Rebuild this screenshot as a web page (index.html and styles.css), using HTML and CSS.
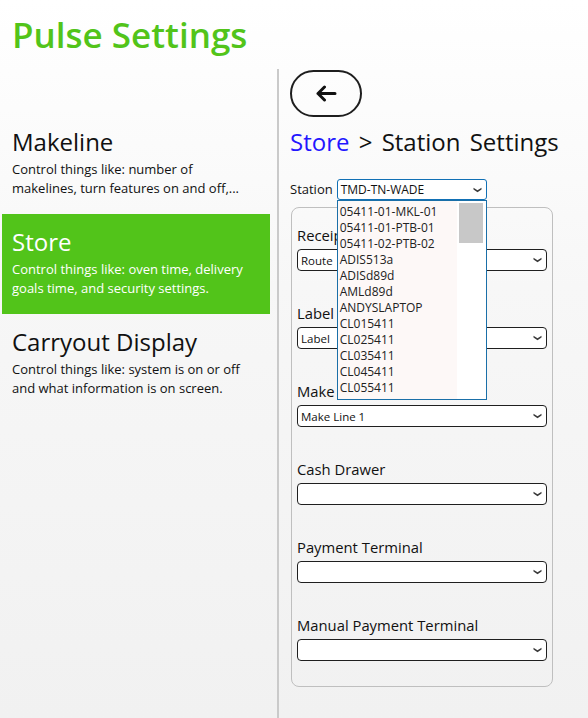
FILE: index.html
```html
<!DOCTYPE html>
<html lang="en">
<head>
<meta charset="utf-8">
<title>Pulse Settings</title>
<link rel="stylesheet" href="styles.css">
</head>
<body>
<header class="app-header">
  <h1 class="app-title">Pulse Settings</h1>
</header>
<div class="layout">
  <nav class="sidebar">
    <a class="nav-item" href="#">
      <h2 class="nav-title">Makeline</h2>
      <p class="nav-desc">Control things like: number of makelines, turn features on and off,...</p>
    </a>
    <a class="nav-item is-active" href="#">
      <h2 class="nav-title">Store</h2>
      <p class="nav-desc">Control things like: oven time, delivery goals time, and security settings.</p>
    </a>
    <a class="nav-item" href="#">
      <h2 class="nav-title">Carryout Display</h2>
      <p class="nav-desc">Control things like: system is on or off and what information is on screen.</p>
    </a>
  </nav>
  <main class="content">
    <button class="back-btn" type="button" aria-label="Back">
      <svg width="22" height="17" viewBox="0 0 22 17"><path d="M20 8.5H3M9.5 2L3 8.5 9.5 15" fill="none" stroke="#111" stroke-width="3" stroke-linecap="round" stroke-linejoin="round"/></svg>
    </button>
    <h2 class="breadcrumb"><a class="crumb-link" href="#">Store</a> &gt; Station Settings</h2>
    <div class="station-row">
      <span class="station-label">Station</span>
      <div class="station-picker">
        <div class="select select-open">
          <span class="select-value">TMD-TN-WADE</span>
          <svg class="chev" width="9" height="6" viewBox="0 0 9 6"><path d="M0.5 0.8L4.5 3.2 8.5 0.8V2.4L4.5 5.2 0.5 2.4Z" fill="#3a3a3a"/></svg>
        </div>
        <div class="dropdown">
          <ul class="dropdown-list">
            <li>05411-01-MKL-01</li>
            <li>05411-01-PTB-01</li>
            <li>05411-02-PTB-02</li>
            <li>ADIS513a</li>
            <li>ADISd89d</li>
            <li>AMLd89d</li>
            <li>ANDYSLAPTOP</li>
            <li>CL015411</li>
            <li>CL025411</li>
            <li>CL035411</li>
            <li>CL045411</li>
            <li>CL055411</li>
          </ul>
          <div class="scrollbar"><div class="scroll-thumb"></div></div>
        </div>
      </div>
    </div>
    <fieldset class="card">
      <div class="field">
        <label class="field-label">Receipt Printer</label>
        <div class="select"><span class="select-value">Route</span><svg class="chev" width="9" height="6" viewBox="0 0 9 6"><path d="M0.5 0.8L4.5 3.2 8.5 0.8V2.4L4.5 5.2 0.5 2.4Z" fill="#3a3a3a"/></svg></div>
      </div>
      <div class="field">
        <label class="field-label">Label Printer</label>
        <div class="select"><span class="select-value">Label</span><svg class="chev" width="9" height="6" viewBox="0 0 9 6"><path d="M0.5 0.8L4.5 3.2 8.5 0.8V2.4L4.5 5.2 0.5 2.4Z" fill="#3a3a3a"/></svg></div>
      </div>
      <div class="field">
        <label class="field-label">Make Line</label>
        <div class="select"><span class="select-value">Make Line 1</span><svg class="chev" width="9" height="6" viewBox="0 0 9 6"><path d="M0.5 0.8L4.5 3.2 8.5 0.8V2.4L4.5 5.2 0.5 2.4Z" fill="#3a3a3a"/></svg></div>
      </div>
      <div class="field">
        <label class="field-label">Cash Drawer</label>
        <div class="select"><span class="select-value"></span><svg class="chev" width="9" height="6" viewBox="0 0 9 6"><path d="M0.5 0.8L4.5 3.2 8.5 0.8V2.4L4.5 5.2 0.5 2.4Z" fill="#3a3a3a"/></svg></div>
      </div>
      <div class="field">
        <label class="field-label">Payment Terminal</label>
        <div class="select"><span class="select-value"></span><svg class="chev" width="9" height="6" viewBox="0 0 9 6"><path d="M0.5 0.8L4.5 3.2 8.5 0.8V2.4L4.5 5.2 0.5 2.4Z" fill="#3a3a3a"/></svg></div>
      </div>
      <div class="field">
        <label class="field-label">Manual Payment Terminal</label>
        <div class="select"><span class="select-value"></span><svg class="chev" width="9" height="6" viewBox="0 0 9 6"><path d="M0.5 0.8L4.5 3.2 8.5 0.8V2.4L4.5 5.2 0.5 2.4Z" fill="#3a3a3a"/></svg></div>
      </div>
    </fieldset>
  </main>
</div>
</body>
</html>
```
FILE: styles.css
```css
* { box-sizing: border-box; }
html, body { margin: 0; padding: 0; }
body {
  width: 588px;
  height: 718px;
  overflow: hidden;
  font-family: "Open Sans", "Noto Sans", sans-serif;
  color: #111;
  background: linear-gradient(to bottom, #ffffff 0%, #f7f7f7 40%, #f1f1f1 100%);
}
.app-header {
  height: 69px;
  padding: 13px 0 0 12px;
}
.app-title {
  margin: 0;
  font-size: 35px;
  line-height: 44px;
  font-weight: 600;
  color: #52c41a;
}
.layout {
  display: flex;
  height: 649px;
}
.sidebar {
  width: 279px;
  flex: none;
  border-right: 2px solid #cacaca;
  padding: 45px 0 0 2px;
  display: flex;
  flex-direction: column;
}
.nav-item {
  display: block;
  width: 268px;
  height: 100px;
  padding: 13px 10px 0 10px;
  text-decoration: none;
  color: #111;
}
.nav-item.is-active {
  background: #52c41a;
  color: #fff;
}
.nav-title {
  margin: 0;
  font-size: 24px;
  line-height: 30px;
  font-weight: 400;
}
.nav-desc {
  margin: 3px 0 0;
  font-size: 13px;
  line-height: 19px;
}
.content {
  flex: 1;
  padding: 1px 0 0 11px;
}
.back-btn {
  display: flex;
  align-items: center;
  justify-content: center;
  width: 72px;
  height: 47px;
  padding: 0;
  border: 2px solid #1e1e1e;
  border-radius: 24px;
  background: transparent;
}
.breadcrumb {
  margin: 10px 0 0;
  font-size: 24px;
  line-height: 30px;
  font-weight: 400;
  word-spacing: 3px;
  color: #111;
}
.crumb-link {
  color: #2316ff;
  text-decoration: none;
}
.station-row {
  display: flex;
  align-items: center;
  gap: 4px;
  margin-top: 22px;
}
.station-label {
  font-size: 13px;
  line-height: 21px;
}
.station-picker {
  position: relative;
  width: 150px;
}
.select {
  display: flex;
  align-items: center;
  justify-content: space-between;
  height: 22px;
  padding: 0 4px 0 3px;
  border: 1px solid #1f1f1f;
  border-radius: 4px;
  background: #fff;
  font-size: 11.5px;
  color: #111;
}
.select-open {
  height: 21px;
  border-color: #1170b5;
  border-radius: 3px;
  font-size: 12px;
}
.chev { flex: none; }
.dropdown {
  position: absolute;
  left: 0;
  top: 21px;
  z-index: 5;
  width: 150px;
  height: 200px;
  display: flex;
  border: 1px solid #1a6fa8;
  background: #fff;
}
.dropdown-list {
  flex: 1;
  margin: 0;
  padding: 3px 0 0 2px;
  list-style: none;
  background: #fdf8f7;
  font-size: 12px;
  line-height: 16px;
  color: #222;
}
.scrollbar {
  width: 29px;
  flex: none;
  padding: 2px 3px 0 2px;
  background: #fff;
}
.scroll-thumb {
  height: 40px;
  background: #c8c8c8;
}
.card {
  width: 262px;
  margin: 7px 0 0 1px;
  padding: 16px 5px 25px;
  border: 1px solid #bfbfbf;
  border-radius: 8px;
  min-width: 0;
}
.field + .field { margin-top: 31px; }
.field-label {
  display: block;
  font-size: 14.8px;
  line-height: 22px;
  margin-bottom: 3px;
  color: #111;
}
```
